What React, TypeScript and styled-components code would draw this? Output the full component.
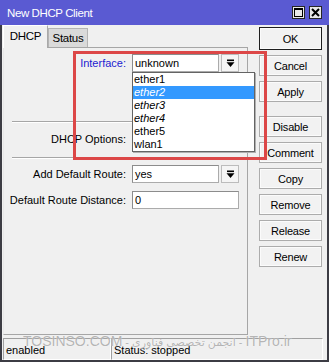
import React from "react";
import styled, { createGlobalStyle, css } from "styled-components";

const GlobalStyle = createGlobalStyle`
  html, body {
    margin: 0;
    padding: 0;
    width: 329px;
    height: 362px;
    overflow: hidden;
    background: #f0f0f0;
  }
  body {
    font-family: "Liberation Sans", Arial, sans-serif;
    font-size: 11px;
    color: #000;
  }
  * { box-sizing: border-box; }
`;

const Window = styled.div`
  position: relative;
  width: 329px;
  height: 362px;
  display: flex;
  flex-direction: column;
  background: #3c3c44;
  overflow: hidden;
`;

const TitleBar = styled.div`
  height: 25px;
  flex-shrink: 0;
  display: flex;
  align-items: center;
  justify-content: space-between;
  padding: 0 7px 0 7px;
  background: #5a5ad2;
  color: #fff;
`;

const Title = styled.span`
  font-size: 11.5px;
  letter-spacing: -0.4px;
`;

const TitleButtons = styled.div`
  display: flex;
  gap: 4px;
`;

const TitleBtn = styled.div`
  width: 13px;
  height: 13px;
  background: #e8e8e8;
  border: 1px solid #262626;
  display: flex;
  align-items: center;
  justify-content: center;
`;

const Body = styled.div`
  flex: 1;
  margin: 0 2px 2px;
  background: #f0f0f0;
  display: flex;
  flex-direction: column;
`;

const Main = styled.div`
  height: 310px;
  display: flex;
`;

const LeftPane = styled.div`
  width: 245px;
  margin-left: 1px;
  display: flex;
  flex-direction: column;
`;

const TabRow = styled.div`
  height: 22px;
  display: flex;
  align-items: flex-end;
  position: relative;
  z-index: 1;
`;

const Tab = styled.div<{ $active?: boolean }>`
  display: flex;
  justify-content: center;
  letter-spacing: -0.3px;
  font-size: 11.5px;
  ${(p) =>
    p.$active
      ? css`
          width: 45px;
          height: 23px;
          margin-bottom: -1px;
          padding-top: 4px;
          background: #f0f0f0;
          border: 1px solid #a9a9a9;
          border-left-color: #fff;
          border-top-color: #fff;
          border-bottom: none;
        `
      : css`
          width: 40px;
          height: 19px;
          padding-top: 3px;
          background: #dadada;
          border: 1px solid #b4b4b4;
          border-bottom: none;
        `}
`;

const Panel = styled.div`
  flex: 1;
  position: relative;
  border: 1px solid #a6a6a6;
  border-left-color: #e8e8e8;
`;

const Form = styled.div`
  padding-top: 6px;
  display: flex;
  flex-direction: column;
`;

const Row = styled.div<{ $top?: number }>`
  display: flex;
  align-items: center;
  height: 18px;
  margin-top: ${(p) => p.$top ?? 0}px;
`;

const Label = styled.div<{ $blue?: boolean }>`
  width: 122px;
  flex-shrink: 0;
  text-align: right;
  white-space: nowrap;
  color: ${(p) => (p.$blue ? "#1c1cd0" : "#000")};
`;

const Field = styled.div<{ $w: number }>`
  margin-left: 6px;
  width: ${(p) => p.$w}px;
  height: 18px;
  background: #fff;
  border: 1px solid #ababab;
  border-top-color: #8c8c8c;
  border-left-color: #8c8c8c;
  padding-left: 2px;
  line-height: 16px;
  white-space: nowrap;
  overflow: hidden;
`;

const DropBtn = styled.div`
  margin-left: 2px;
  width: 18px;
  height: 18px;
  background: #f5f5f5;
  border: 1px solid #bcbcbc;
  display: flex;
  align-items: center;
  justify-content: center;
`;

const Separator = styled.div<{ $top: number }>`
  margin-top: ${(p) => p.$top}px;
  margin-left: 8px;
  height: 2px;
  border-top: 1px solid #a6a6a6;
  border-bottom: 1px solid #ffffff;
`;

const DropList = styled.div`
  position: absolute;
  left: 128px;
  top: 24px;
  width: 123px;
  background: #fff;
  border: 1px solid #646464;
  box-shadow: 1px 1px 0 #b0b0b0;
  z-index: 2;
`;

const ListItem = styled.div<{ $italic?: boolean; $selected?: boolean }>`
  height: 13px;
  line-height: 13px;
  padding-left: 1px;
  font-style: ${(p) => (p.$italic ? "italic" : "normal")};
  background: ${(p) => (p.$selected ? "#3399ff" : "transparent")};
  color: ${(p) => (p.$selected ? "#fff" : "#000")};
`;

const ButtonColumn = styled.div`
  margin-left: 11px;
  width: 63px;
  padding-top: 2px;
  display: flex;
  flex-direction: column;
`;

const Button = styled.div<{ $top?: number; $default?: boolean }>`
  margin-top: ${(p) => p.$top ?? 5}px;
  height: ${(p) => (p.$default ? 23 : 21)}px;
  display: flex;
  align-items: center;
  justify-content: center;
  background: #f2f2f2;
  border: 1px solid ${(p) => (p.$default ? "#1e1e1e" : "#acacac")};
  box-shadow: inset 0 0 0 1px #fbfbfb;
  letter-spacing: -0.2px;
`;

const StatusBar = styled.div`
  height: 22px;
  margin: 3px 4px 0 1px;
  display: flex;
`;

const StatusCell = styled.div<{ $w?: number }>`
  ${(p) => (p.$w ? `width: ${p.$w}px;` : "flex: 1;")}
  border: 1px solid;
  border-color: #a0a0a0 #ffffff #ffffff #a0a0a0;
  padding-left: 2px;
  line-height: 20px;
  padding-top: 1px;
`;

const Highlight = styled.div`
  position: absolute;
  left: 73px;
  top: 51px;
  width: 194px;
  height: 109px;
  border: 3px solid #dc4747;
  pointer-events: none;
  z-index: 5;
`;

const Watermark = styled.div`
  position: absolute;
  left: 23px;
  top: 333px;
  font-family: "Liberation Sans", "DejaVu Sans", sans-serif;
  font-size: 11px;
  white-space: nowrap;
  color: rgba(150, 150, 150, 0.7);
  text-shadow: 0 0 1px rgba(255, 255, 255, 0.9);
  pointer-events: none;
  z-index: 6;
`;

const WatermarkLatin = styled.span`
  font-size: 14px;
`;

const DropIcon = () => (
  <svg width="9" height="9" viewBox="0 0 9 9">
    <rect x="1" y="0.5" width="7" height="1.6" fill="#000" />
    <polygon points="0.5,3.2 8.5,3.2 4.5,8" fill="#000" />
  </svg>
);

const MaxIcon = () => (
  <svg width="9" height="9" viewBox="0 0 9 9">
    <rect x="0.5" y="0.5" width="8" height="8" fill="none" stroke="#000" strokeWidth="1" />
    <rect x="0.5" y="0.5" width="8" height="1.5" fill="#000" />
  </svg>
);

const CloseIcon = () => (
  <svg width="9" height="9" viewBox="0 0 9 9">
    <path d="M1 1 L8 8 M8 1 L1 8" stroke="#000" strokeWidth="2" />
  </svg>
);

const interfaces = [
  { name: "ether1" },
  { name: "ether2", italic: true, selected: true },
  { name: "ether3", italic: true },
  { name: "ether4", italic: true },
  { name: "ether5" },
  { name: "wlan1" },
];

const buttons: { label: string; top?: number; def?: boolean }[] = [
  { label: "OK", top: 0, def: true },
  { label: "Cancel" },
  { label: "Apply" },
  { label: "Disable", top: 14 },
  { label: "Comment" },
  { label: "Copy" },
  { label: "Remove" },
  { label: "Release" },
  { label: "Renew" },
];

export default function App() {
  return (
    <>
      <GlobalStyle />
      <Window>
        <TitleBar>
          <Title>New DHCP Client</Title>
          <TitleButtons>
            <TitleBtn>
              <MaxIcon />
            </TitleBtn>
            <TitleBtn>
              <CloseIcon />
            </TitleBtn>
          </TitleButtons>
        </TitleBar>
        <Body>
          <Main>
            <LeftPane>
              <TabRow>
                <Tab $active>DHCP</Tab>
                <Tab>Status</Tab>
              </TabRow>
              <Panel>
                <Form>
                  <Row>
                    <Label $blue>Interface:</Label>
                    <Field $w={87}>unknown</Field>
                    <DropBtn>
                      <DropIcon />
                    </DropBtn>
                  </Row>
                  <Separator $top={49} />
                  <Row $top={7}>
                    <Label>DHCP Options:</Label>
                    <Field $w={87} />
                    <DropBtn>
                      <DropIcon />
                    </DropBtn>
                  </Row>
                  <Separator $top={9} />
                  <Row $top={6}>
                    <Label>Add Default Route:</Label>
                    <Field $w={87}>yes</Field>
                    <DropBtn>
                      <DropIcon />
                    </DropBtn>
                  </Row>
                  <Row $top={8}>
                    <Label>Default Route Distance:</Label>
                    <Field $w={107}>0</Field>
                  </Row>
                </Form>
                <DropList>
                  {interfaces.map((it) => (
                    <ListItem key={it.name} $italic={it.italic} $selected={it.selected}>
                      {it.name}
                    </ListItem>
                  ))}
                </DropList>
              </Panel>
            </LeftPane>
            <ButtonColumn>
              {buttons.map((b) => (
                <Button key={b.label} $top={b.top} $default={b.def}>
                  {b.label}
                </Button>
              ))}
            </ButtonColumn>
          </Main>
          <StatusBar>
            <StatusCell $w={108}>enabled</StatusCell>
            <StatusCell>Status: stopped</StatusCell>
          </StatusBar>
        </Body>
        <Highlight />
        <Watermark>
          <WatermarkLatin>TOSINSO.COM</WatermarkLatin> - انجمن تخصصی فناوری -{" "}
          <WatermarkLatin>ITPro.ir</WatermarkLatin>
        </Watermark>
      </Window>
    </>
  );
}
